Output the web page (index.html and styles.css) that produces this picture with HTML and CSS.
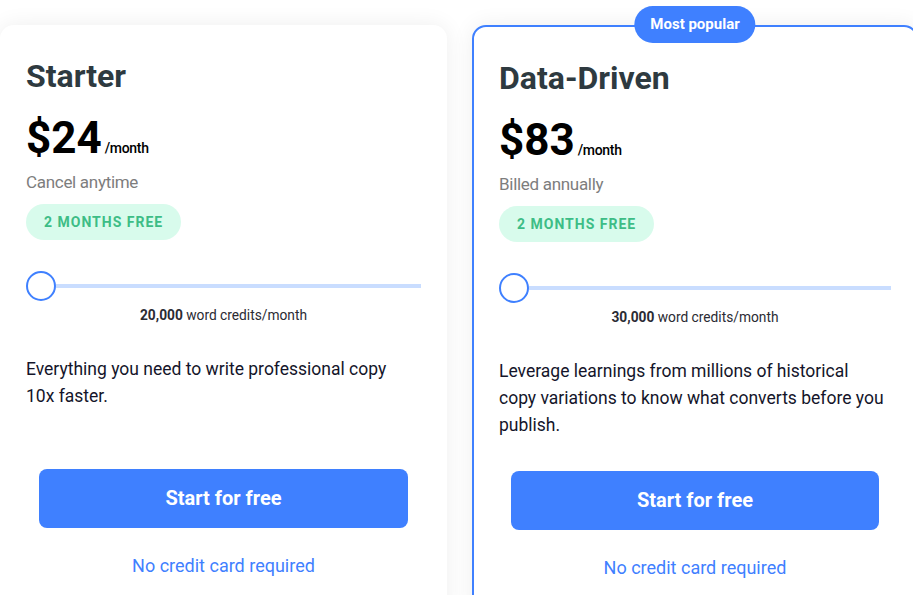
FILE: index.html
```html
<!DOCTYPE html>
<html lang="en">
  <head>
    <meta charset="UTF-8" />
    <meta name="viewport" content="width=device-width, initial-scale=1.0" />
    <title>Pricing</title>
    <link rel="stylesheet" href="styles.css">
  </head>
  <body>
    <div class="plans">
      <div class="plan">
        <h2 class="plan-name">Starter</h2>
        <div class="price"><span class="amount">$24</span> <span class="per">/month</span></div>
        <div class="billing">Cancel anytime</div>
        <div><span class="free-badge">2 months free</span></div>
        <div class="slider">
          <span class="thumb"></span>
          <span class="track"></span>
        </div>
        <div class="credits"><b>20,000</b> word credits/month</div>
        <p class="desc">Everything you need to write professional copy 10x faster.</p>
        <a class="cta" href="#">Start for free</a>
        <div class="note">No credit card required</div>
      </div>

      <div class="plan popular">
        <span class="popular-tag">Most popular</span>
        <h2 class="plan-name">Data-Driven</h2>
        <div class="price"><span class="amount">$83</span> <span class="per">/month</span></div>
        <div class="billing">Billed annually</div>
        <div><span class="free-badge">2 months free</span></div>
        <div class="slider">
          <span class="thumb"></span>
          <span class="track"></span>
        </div>
        <div class="credits"><b>30,000</b> word credits/month</div>
        <p class="desc">Leverage learnings from millions of historical copy variations to know what converts before you publish.</p>
        <a class="cta" href="#">Start for free</a>
        <div class="note">No credit card required</div>
      </div>
    </div>
  </body>
</html>
```

FILE: styles.css
```css
body {
  margin: 0;
  font-family: Roboto, "Liberation Sans", sans-serif;
  background: #fff;
  overflow: hidden;
}

.plans {
  display: flex;
  gap: 25px;
  padding-top: 25px;
  width: 1000px;
}

.plan {
  position: relative;
  flex: none;
  width: 447px;
  box-sizing: border-box;
  padding: 32px 26px 40px;
  background: #fff;
  border-radius: 14px;
  box-shadow: 0 0 22px rgba(0, 0, 0, 0.07);
  display: flex;
  flex-direction: column;
}

.plan.popular {
  width: 446px;
  border: 2px solid #3f80ff;
  padding: 32px 25px 40px;
}

.popular-tag {
  position: absolute;
  top: -21px;
  left: 50%;
  transform: translateX(-50%);
  background: #3f80ff;
  color: #fff;
  font-size: 15px;
  font-weight: 700;
  line-height: 37px;
  padding: 0 16px;
  border-radius: 19px;
  white-space: nowrap;
}

.plan-name {
  margin: 0;
  font-size: 32px;
  line-height: 38px;
  font-weight: 700;
  color: #2e3a40;
}

.price {
  margin-top: 17px;
  font-size: 44px;
  line-height: 52px;
  color: #000;
  word-spacing: -8px;
}

.amount {
  font-weight: 700;
}

.per {
  font-size: 14px;
  line-height: 1;
  font-weight: 500;
  letter-spacing: -0.3px;
  word-spacing: 0;
}

.billing {
  margin-top: 6px;
  font-size: 17px;
  line-height: 24px;
  color: #7d7d7d;
  letter-spacing: -0.3px;
}

.free-badge {
  display: inline-block;
  margin-top: 10px;
  padding: 0 18px;
  line-height: 36px;
  border-radius: 18px;
  background: #d8fbec;
  color: #3dbd86;
  font-size: 14px;
  font-weight: 700;
  letter-spacing: 1px;
  text-transform: uppercase;
}

.slider {
  margin-top: 31px;
  height: 30px;
  display: flex;
  align-items: center;
}

.thumb {
  flex: none;
  width: 30px;
  height: 30px;
  box-sizing: border-box;
  border: 2px solid #3f80ff;
  border-radius: 50%;
  background: #fff;
}

.track {
  flex: 1;
  height: 4px;
  background: #c9ddff;
}

.credits {
  margin-top: 4px;
  text-align: center;
  font-size: 13.75px;
  line-height: 20px;
  color: #2b2b33;
}

.credits b {
  font-weight: 700;
}

.desc {
  margin: 31px 0 0;
  max-width: 390px;
  min-height: 81px;
  font-size: 17.5px;
  line-height: 27px;
  color: #14152a;
}

.cta {
  display: block;
  margin: 32px 13px 0;
  height: 59px;
  line-height: 59px;
  border-radius: 8px;
  background: #3f80ff;
  color: #fff;
  text-align: center;
  text-decoration: none;
  font-size: 20px;
  font-weight: 700;
}

.popular .cta {
  margin: 32px 12px 0;
}

.note {
  margin-top: 26px;
  text-align: center;
  font-size: 18px;
  line-height: 24px;
  color: #3f80ff;
}
```
